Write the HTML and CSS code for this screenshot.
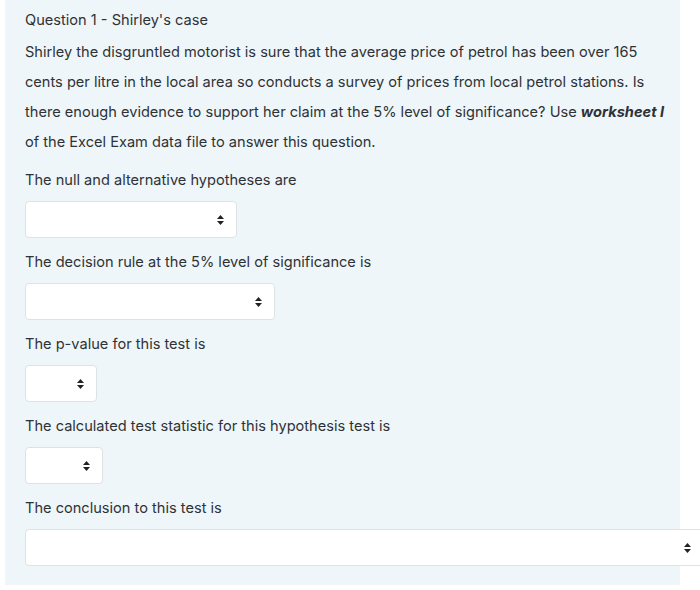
FILE: index.html
```html
<!DOCTYPE html>
<html lang="en">
  <head>
    <meta charset="UTF-8" />
    <title>Question 1 - Shirley's case</title>
    <link rel="stylesheet" href="styles.css">
  </head>
  <body>
    <div class="question">
      <h2 class="question-title">Question 1 - Shirley's case</h2>
      <p class="question-text">
        Shirley the disgruntled motorist is sure that the average price of petrol has been over 165
        cents per litre in the local area so conducts a survey of prices from local petrol stations. Is
        there enough evidence to support her claim at the 5% level of significance? Use <strong><em>worksheet I</em></strong>
        of the Excel Exam data file to answer this question.
      </p>
      <form class="answers">
        <label class="answer">
          <span>The null and alternative hypotheses are</span>
          <select class="choice choice-md"><option></option></select>
        </label>
        <label class="answer">
          <span>The decision rule at the 5% level of significance is</span>
          <select class="choice choice-lg"><option></option></select>
        </label>
        <label class="answer">
          <span>The p-value for this test is</span>
          <select class="choice choice-xs"><option></option></select>
        </label>
        <label class="answer">
          <span>The calculated test statistic for this hypothesis test is</span>
          <select class="choice choice-sm"><option></option></select>
        </label>
        <label class="answer">
          <span>The conclusion to this test is</span>
          <select class="choice choice-full"><option></option></select>
        </label>
      </form>
    </div>
  </body>
</html>
```

FILE: styles.css
```css
body {
  margin: 0;
  overflow: hidden;
  font-family: Inter, "Liberation Sans", sans-serif;
  font-size: 14.6px;
  line-height: 30px;
  color: #2f3235;
}
.question {
  width: 675px;
  margin-left: 5px;
  padding: 5px 0 19px 20px;
  box-sizing: border-box;
  background-color: #eef6fa;
}
.question-title {
  margin: 0;
  font-size: inherit;
  font-weight: normal;
}
.question-text {
  max-width: 640px;
  margin: 2px 0 8px;
}
.answers {
  display: flex;
  flex-direction: column;
  gap: 9px;
}
.answer {
  display: flex;
  flex-direction: column;
  align-items: flex-start;
  gap: 6px;
}
.choice {
  appearance: none;
  height: 37px;
  border: 1px solid #dfe2e5;
  border-radius: 4px;
  background: #fff url("data:image/svg+xml;utf8,<svg xmlns='http://www.w3.org/2000/svg' width='7' height='10' viewBox='0 0 7 10'><path d='M3.5 0 7 4H0z M3.5 10 7 6H0z' fill='%23222'/></svg>") no-repeat right 12px center;
  font: inherit;
}
.choice-md {
  width: 212px;
}
.choice-lg {
  width: 250px;
}
.choice-xs {
  width: 72px;
}
.choice-sm {
  width: 78px;
}
.choice-full {
  width: 679px;
}
```
